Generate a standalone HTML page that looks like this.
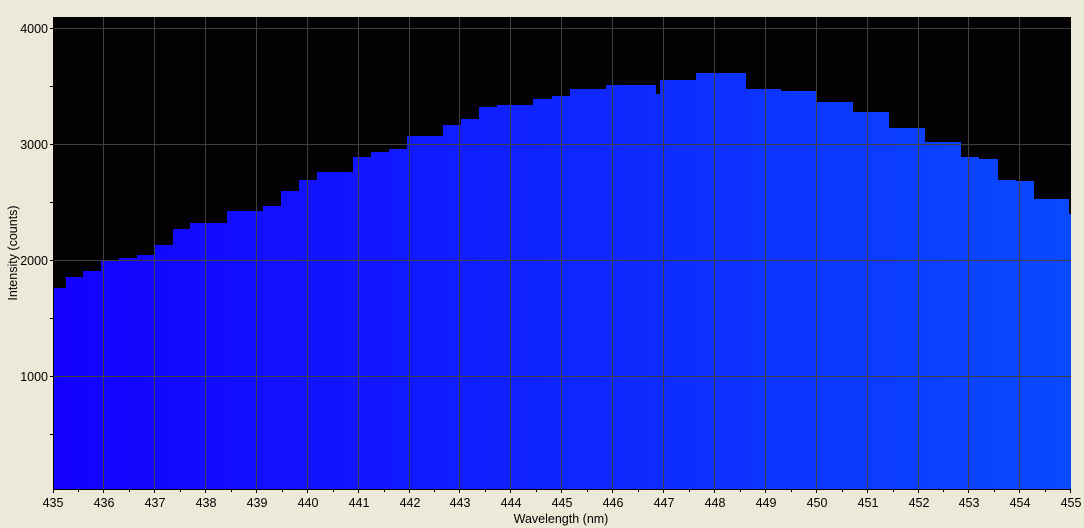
<!DOCTYPE html><html><head><style>body{margin:0;background:#ece9d8;}svg{display:block}text{font-family:"Liberation Sans",sans-serif;font-size:12.5px;fill:#000}</style></head><body>
<svg width="1084" height="528" viewBox="0 0 1084 528">
<defs><linearGradient id="g" x1="0" x2="1"><stop offset="0" stop-color="#1400ff"/><stop offset="1" stop-color="#0a4aff"/></linearGradient></defs>
<rect x="53" y="17" width="1018" height="472" fill="#040205"/>
<path fill="url(#g)" d="M53,489 V288 H66 V277 H83 V271 H101 V261 H119 V258 H137 V255 H155 V245 H173 V229 H190 V223 H227 V211 H263 V206 H281 V191 H299 V180 H317 V172 H353 V157 H371 V152 H389 V149 H407 V136 H443 V125 H461 V119 H479 V107 H497 V105 H533 V99 H552 V96 H570 V89 H606 V85 H656 V94 H660 V80 H696 V73 H746 V89 H781 V91 H817 V102 H853 V112 H889 V128 H925 V142 H961 V157 H979 V159 H998 V180 H1016 V181 H1034 V199 H1069 V214 H1071 V489 Z"/>
<g stroke="#404040" stroke-width="1">
<line x1="53" x2="1071" y1="28.5" y2="28.5"/><line x1="53" x2="1071" y1="144.5" y2="144.5"/><line x1="53" x2="1071" y1="260.5" y2="260.5"/><line x1="53" x2="1071" y1="376.5" y2="376.5"/>
<line x1="103.5" x2="103.5" y1="17" y2="489"/><line x1="154.5" x2="154.5" y1="17" y2="489"/><line x1="205.5" x2="205.5" y1="17" y2="489"/><line x1="256.5" x2="256.5" y1="17" y2="489"/><line x1="307.5" x2="307.5" y1="17" y2="489"/><line x1="358.5" x2="358.5" y1="17" y2="489"/><line x1="409.5" x2="409.5" y1="17" y2="489"/><line x1="459.5" x2="459.5" y1="17" y2="489"/><line x1="510.5" x2="510.5" y1="17" y2="489"/><line x1="561.5" x2="561.5" y1="17" y2="489"/><line x1="612.5" x2="612.5" y1="17" y2="489"/><line x1="663.5" x2="663.5" y1="17" y2="489"/><line x1="714.5" x2="714.5" y1="17" y2="489"/><line x1="765.5" x2="765.5" y1="17" y2="489"/><line x1="816.5" x2="816.5" y1="17" y2="489"/><line x1="867.5" x2="867.5" y1="17" y2="489"/><line x1="918.5" x2="918.5" y1="17" y2="489"/><line x1="968.5" x2="968.5" y1="17" y2="489"/><line x1="1019.5" x2="1019.5" y1="17" y2="489"/>
</g>
<g stroke="#000" stroke-width="1">
<line x1="53.5" x2="53.5" y1="17" y2="490"/><line x1="53" x2="1071" y1="489.5" y2="489.5"/>
<line x1="50" x2="53" y1="28.5" y2="28.5"/><line x1="50" x2="53" y1="86.5" y2="86.5"/><line x1="50" x2="53" y1="144.5" y2="144.5"/><line x1="50" x2="53" y1="202.5" y2="202.5"/><line x1="50" x2="53" y1="260.5" y2="260.5"/><line x1="50" x2="53" y1="318.5" y2="318.5"/><line x1="50" x2="53" y1="376.5" y2="376.5"/><line x1="50" x2="53" y1="434.5" y2="434.5"/>
</g>
<g text-anchor="end"><text x="48" y="33">4000</text><text x="48" y="149">3000</text><text x="48" y="265">2000</text><text x="48" y="381">1000</text></g>
<g text-anchor="middle">
<text x="53" y="507">435</text><text x="104" y="507">436</text><text x="155" y="507">437</text><text x="206" y="507">438</text><text x="257" y="507">439</text><text x="308" y="507">440</text><text x="359" y="507">441</text><text x="410" y="507">442</text><text x="460" y="507">443</text><text x="511" y="507">444</text><text x="562" y="507">445</text><text x="613" y="507">446</text><text x="664" y="507">447</text><text x="715" y="507">448</text><text x="766" y="507">449</text><text x="817" y="507">450</text><text x="868" y="507">451</text><text x="919" y="507">452</text><text x="969" y="507">453</text><text x="1020" y="507">454</text><text x="1071" y="507">455</text>
<text x="561" y="523">Wavelength (nm)</text>
<text transform="translate(17,253) rotate(-90)">Intensity (counts)</text>
</g>
<path stroke="#000" fill="none" d="M53.5,489v4M78.5,489v3M103.5,489v4M129.5,489v3M154.5,489v4M180.5,489v3M205.5,489v4M231.5,489v3M256.5,489v4M282.5,489v3M307.5,489v4M333.5,489v3M358.5,489v4M384.5,489v3M409.5,489v4M434.5,489v3M459.5,489v4M485.5,489v3M510.5,489v4M536.5,489v3M561.5,489v4M587.5,489v3M612.5,489v4M638.5,489v3M663.5,489v4M689.5,489v3M714.5,489v4M740.5,489v3M765.5,489v4M791.5,489v3M816.5,489v4M842.5,489v3M867.5,489v4M893.5,489v3M918.5,489v4M943.5,489v3M968.5,489v4M994.5,489v3M1019.5,489v4M1045.5,489v3M1070.5,489v4"/>
</svg>
</body></html>
